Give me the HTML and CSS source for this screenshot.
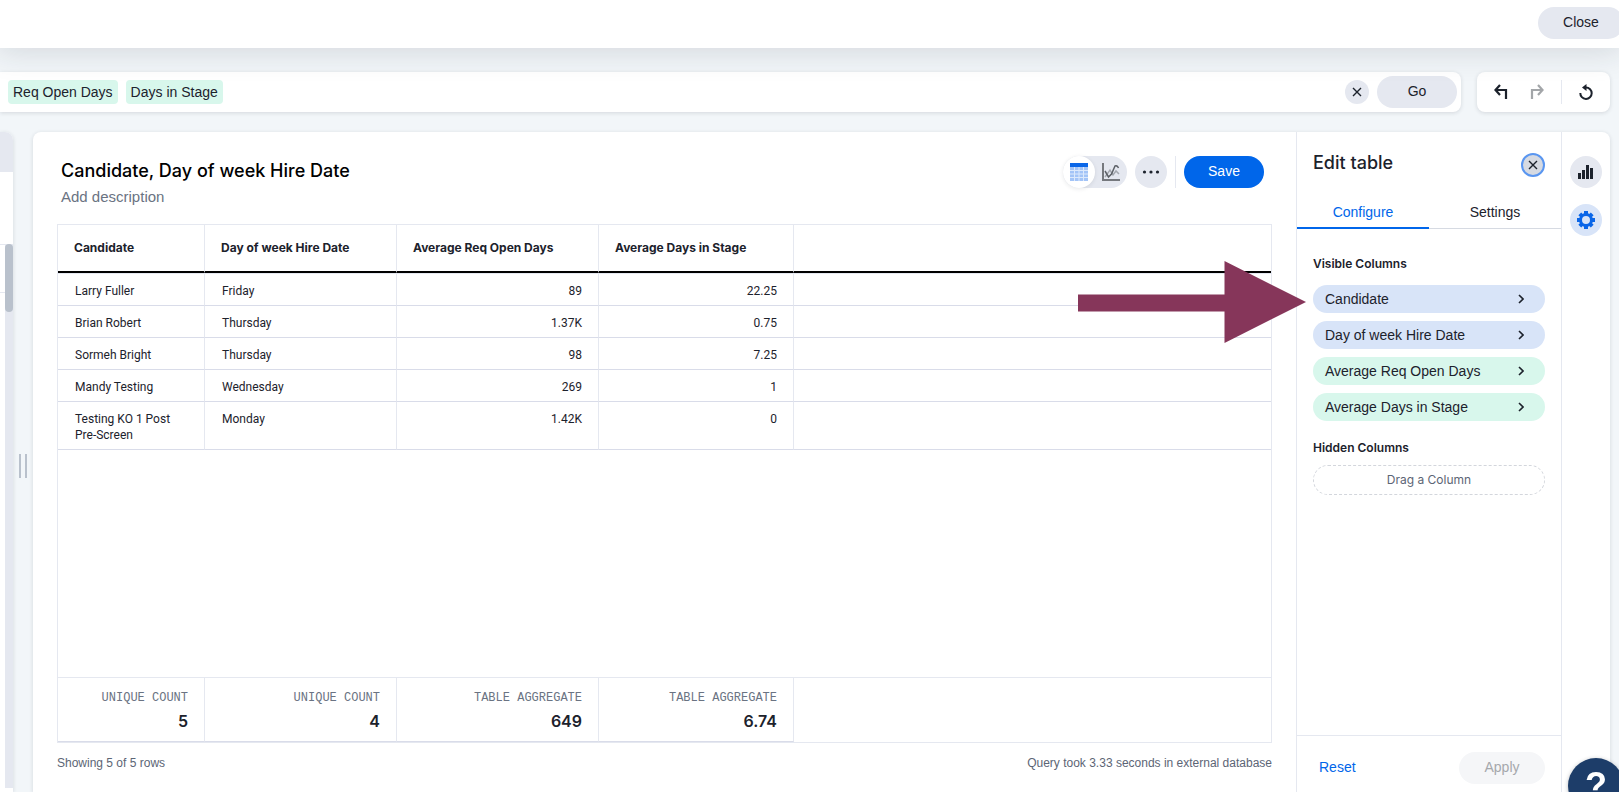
FILE: index.html
```html
<!DOCTYPE html>
<html lang="en">
<head>
  <meta charset="UTF-8">
  <title>Candidate, Day of week Hire Date</title>
  <link rel="stylesheet" href="styles.css">
</head>
<body>
  <header class="topbar">
    <button class="btn btn-close" type="button">Close</button>
  </header>

  <div class="query">
    <div class="search">
      <span class="chip">Req Open Days</span>
      <span class="chip">Days in Stage</span>
      <button class="icon-btn small clear" type="button" aria-label="Clear">
        <svg width="10" height="10" viewBox="0 0 10 10"><path d="M1 1l8 8M9 1l-8 8" stroke="#1c222c" stroke-width="1.4"/></svg>
      </button>
      <button class="btn btn-go" type="button">Go</button>
    </div>
    <div class="history">
      <button class="tool" type="button" aria-label="Undo">
        <svg width="16" height="16" viewBox="0 0 16 16" fill="none" stroke="#1c222c" stroke-width="2.2"><path d="M7 1L2.500 6 7 11M2.500 6H13v9"/></svg>
      </button>
      <button class="tool" type="button" aria-label="Redo" disabled>
        <svg width="16" height="16" viewBox="0 0 16 16" fill="none" stroke="#a3a6a9" stroke-width="2.2"><path d="M9 1l4.500 5L9 11M13.500 6H3v9"/></svg>
      </button>
      <span class="divider"></span>
      <button class="tool" type="button" aria-label="Reset query">
        <svg width="16" height="16" viewBox="0 0 16 16"><path d="M2.300 9a5.700 5.700 0 1 0 5.700-5.500" fill="none" stroke="#1c222c" stroke-width="2"/><path d="M8.500 0v7L4 3.500z" fill="#1c222c"/></svg>
      </button>
    </div>
  </div>

  <div class="workspace">
    <aside class="sources">
      <div class="sources-head"></div>
      <div class="sources-body">
        <div class="sources-list"><div class="source"></div></div>
        <div class="track"><div class="thumb"></div></div>
      </div>
    </aside>
    <div class="resizer"></div>

    <div class="card">
      <main class="answer">
        <div class="answer-head">
          <div>
            <h1>Candidate, Day of week Hire Date</h1>
            <p class="description">Add description</p>
          </div>
          <div class="actions">
            <div class="toggle">
              <button class="view active" type="button" aria-label="Table view">
                <svg width="18" height="18" viewBox="0 0 18 18"><path d="M0 0h18v18H0z" fill="#a3c4f7"/><path d="M0 0h18v4H0z" fill="#0a66e8"/><path d="M0 7.500h18M0 11h18M0 14.500h18M4.500 4v14M9 4v14M13.500 4v14" stroke="#dce9fc"/></svg>
              </button>
              <button class="view" type="button" aria-label="Chart view">
                <svg width="18" height="18" viewBox="0 0 18 18" fill="none"><path d="M1 0v17h17" stroke="#75787d" stroke-width="2"/><path d="M3 14l5-7 3 5 3-4 3 3" stroke="#a4a8af" stroke-width="1.5"/><path d="M3 8l3.500 6 3-3L13 3q2-1 3.500 2" stroke="#5c6066" stroke-width="1.5"/></svg>
              </button>
            </div>
            <button class="icon-btn" type="button" aria-label="More">
              <svg width="18" height="4" viewBox="0 0 18 4" fill="#1c222c"><circle cx="2.500" cy="2" r="1.600"/><circle cx="9" cy="2" r="1.600"/><circle cx="15.500" cy="2" r="1.600"/></svg>
            </button>
            <span class="divider tall"></span>
            <button class="btn btn-save" type="button">Save</button>
          </div>
        </div>

        <div class="grid">
          <table>
            <colgroup>
              <col class="c1"><col class="c2"><col class="c3"><col class="c4"><col>
            </colgroup>
            <thead>
              <tr><th>Candidate</th><th>Day of week Hire Date</th><th>Average Req Open Days</th><th>Average Days in Stage</th><th></th></tr>
            </thead>
            <tbody>
              <tr class="first"><td>Larry Fuller</td><td>Friday</td><td class="num">89</td><td class="num">22.25</td><td></td></tr>
              <tr><td>Brian Robert</td><td>Thursday</td><td class="num">1.37K</td><td class="num">0.75</td><td></td></tr>
              <tr><td>Sormeh Bright</td><td>Thursday</td><td class="num">98</td><td class="num">7.25</td><td></td></tr>
              <tr><td>Mandy Testing</td><td>Wednesday</td><td class="num">269</td><td class="num">1</td><td></td></tr>
              <tr class="last"><td>Testing KO 1 Post Pre-Screen</td><td>Monday</td><td class="num">1.42K</td><td class="num">0</td><td></td></tr>
              <tr class="filler"><td colspan="5"></td></tr>
            </tbody>
            <tfoot>
              <tr>
                <td><span class="agg">UNIQUE COUNT</span><strong>5</strong></td>
                <td><span class="agg">UNIQUE COUNT</span><strong>4</strong></td>
                <td><span class="agg">TABLE AGGREGATE</span><strong>649</strong></td>
                <td><span class="agg">TABLE AGGREGATE</span><strong>6.74</strong></td>
                <td></td>
              </tr>
            </tfoot>
          </table>
        </div>

        <div class="status">
          <span>Showing 5 of 5 rows</span>
          <span>Query took 3.33 seconds in external database</span>
        </div>
      </main>

      <section class="panel">
        <div class="panel-head">
          <h2>Edit table</h2>
          <button class="icon-btn small focused" type="button" aria-label="Close panel">
            <svg width="10" height="10" viewBox="0 0 10 10"><path d="M1 1l8 8M9 1l-8 8" stroke="#1c222c" stroke-width="1.4"/></svg>
          </button>
        </div>
        <div class="tabs">
          <button class="tab active" type="button">Configure</button>
          <button class="tab" type="button">Settings</button>
        </div>
        <div class="panel-body">
          <h3>Visible Columns</h3>
          <div class="columns">
            <button class="column" type="button">Candidate <svg width="6" height="10" viewBox="0 0 6 10"><path d="M1 1l4 4-4 4" fill="none" stroke="#1c222c" stroke-width="1.6"/></svg></button>
            <button class="column" type="button">Day of week Hire Date <svg width="6" height="10" viewBox="0 0 6 10"><path d="M1 1l4 4-4 4" fill="none" stroke="#1c222c" stroke-width="1.6"/></svg></button>
            <button class="column measure" type="button">Average Req Open Days <svg width="6" height="10" viewBox="0 0 6 10"><path d="M1 1l4 4-4 4" fill="none" stroke="#1c222c" stroke-width="1.6"/></svg></button>
            <button class="column measure" type="button">Average Days in Stage <svg width="6" height="10" viewBox="0 0 6 10"><path d="M1 1l4 4-4 4" fill="none" stroke="#1c222c" stroke-width="1.6"/></svg></button>
          </div>
          <h3>Hidden Columns</h3>
          <div class="dropzone">Drag a Column</div>
        </div>
        <div class="panel-foot">
          <button class="btn btn-reset" type="button">Reset</button>
          <button class="btn btn-apply" type="button" disabled>Apply</button>
        </div>
      </section>

      <nav class="rail">
        <button class="icon-btn" type="button" aria-label="Chart type">
          <svg width="16" height="16" viewBox="0 0 16 16" fill="#1c222c"><path d="M0 9h3v6H0zM4 6h3v9H4zM8 1h3v14H8zM12 4h3v11h-3z"/></svg>
        </button>
        <button class="icon-btn selected" type="button" aria-label="Configure table">
          <svg width="18" height="18" viewBox="-9 -9 18 18"><circle r="5.500" fill="none" stroke="#0a66e8" stroke-width="3"/><path d="M0-9V-6M0 6v3M-9 0h3M6 0h3M-6.200-6.200l2 2M4.200 4.200l2 2M-6.200 6.200l2-2M4.200-4.200l2-2" stroke="#0a66e8" stroke-width="4"/></svg>
        </button>
      </nav>
    </div>
  </div>

  <!-- callout pointing at the first column -->
  <svg class="callout" width="229" height="82" viewBox="0 0 229 82"><path d="M0 33.500h146.500V0L228 41l-81.500 41V50.500H0z" fill="#86365a"/></svg>
  <button class="help" type="button" aria-label="Help">?</button>
</body>
</html>
```
FILE: styles.css
```css
* {
  box-sizing: border-box;
}

body {
  margin: 0;
  height: 100vh;
  display: flex;
  flex-direction: column;
  overflow: hidden;
  background: #f2f6f9;
  color: #1c222c;
  font-family: "Liberation Sans", Arial, sans-serif;
  font-size: 14px;
}

button {
  border: 0;
  padding: 0;
  background: none;
  color: inherit;
  font: inherit;
}

svg {
  display: block;
}

h1, h2, h3, p {
  margin: 0;
}

.topbar {
  position: relative;
  z-index: 1;
  flex: none;
  height: 48px;
  display: flex;
  align-items: center;
  justify-content: flex-end;
  padding-bottom: 2px;
  background: #fff;
  box-shadow: 0 0 32px 4px rgba(25, 35, 49, 0.14);
}

.btn {
  height: 32px;
  width: 80px;
  padding-bottom: 2px;
  border-radius: 16px;
  background: #e5e8f0;
}
.btn-close {
  width: 86px;
  margin-right: -5px;
}
.btn-save {
  background: #0066ea;
  color: #fff;
}
.btn-reset {
  width: auto;
  padding: 0 6px 2px;
  background: none;
  color: #0066ea;
}
.btn-apply {
  width: 86px;
  background: #f5f6f8;
  color: #a5a8ac;
}

.icon-btn {
  display: flex;
  align-items: center;
  justify-content: center;
  width: 32px;
  height: 32px;
  border-radius: 50%;
  background: #e5e8f0;
}
.icon-btn.small {
  width: 24px;
  height: 24px;
}
.icon-btn.focused {
  border: 2px solid #5a96f0;
  background: #d6dae2;
}
.icon-btn.selected {
  background: #d8e4f8;
}

.divider {
  width: 1px;
  height: 24px;
  background: #e5e8f0;
}
.divider.tall {
  height: 32px;
}

/* search bar */
.query {
  flex: none;
  display: flex;
  gap: 16px;
  margin-top: 24px;
  padding-right: 9px;
}
.search, .history {
  display: flex;
  align-items: center;
  height: 40px;
  background: #fff;
  border-radius: 8px;
  box-shadow: 0 1px 4px rgba(25, 35, 49, 0.14);
}
.search {
  flex: 1;
  gap: 8px;
  padding: 0 4px 0 8px;
  border-radius: 0 8px 8px 0;
}
.history {
  width: 133px;
  padding-left: 6px;
}
.chip {
  height: 24px;
  line-height: 24px;
  padding: 0 5px;
  border-radius: 4px;
  background: #d8f7ec;
}
.clear {
  margin-left: auto;
}
.tool {
  display: flex;
  align-items: center;
  justify-content: center;
  width: 36px;
  height: 32px;
}
.history .divider {
  margin: 0 6px;
}

/* workspace */
.workspace {
  flex: 1;
  min-height: 0;
  display: flex;
  margin-top: 20px;
  padding-right: 9px;
}
.sources {
  width: 13px;
  display: flex;
  flex-direction: column;
  background: #fff;
  border-radius: 0 8px 0 0;
  box-shadow: 0 1px 4px rgba(25, 35, 49, 0.14);
}
.sources-head {
  height: 40px;
  border-radius: 0 8px 0 0;
  background: #e5e8f0;
}
.sources-body {
  flex: 1;
  display: flex;
  margin: 72px 0 4px;
}
.sources-list {
  flex: 1;
  border-top: 1px solid #e5e8f0;
}
.source {
  height: 48px;
  border-bottom: 1px solid #e5e8f0;
}
.track {
  width: 8px;
  background: #e5e8f0;
}
.thumb {
  height: 68px;
  border-radius: 4px;
  background: #b9c1cc;
}
.resizer {
  align-self: center;
  width: 8px;
  height: 24px;
  margin: 8px 6px 0;
  border: solid #b9c1cc;
  border-width: 0 2px;
}

.card {
  flex: 1;
  display: flex;
  background: #fff;
  border-radius: 8px 8px 0 0;
  box-shadow: 0 1px 4px rgba(25, 35, 49, 0.14);
}
.answer {
  flex: 1;
  display: flex;
  flex-direction: column;
  padding: 24px 24px 21px;
}
.answer-head {
  display: flex;
  justify-content: space-between;
  height: 68px;
  padding: 0 8px 0 4px;
}
h1, h2 {
  font-family: Inter, sans-serif;
  font-size: 18px;
  font-weight: 500;
}
h1 {
  line-height: 30px;
  color: #000;
}
.description {
  font-size: 15px;
  line-height: 22px;
  color: #6a7382;
}
.actions {
  display: flex;
  gap: 8px;
}
.toggle {
  display: flex;
  height: 32px;
  border-radius: 16px;
  background: #e5e8f0;
}
.view {
  display: flex;
  align-items: center;
  justify-content: center;
  width: 32px;
  border-radius: 50%;
}
.view.active {
  background: #fff;
  box-shadow: 0 1px 4px rgba(25, 35, 49, 0.1);
}

.grid {
  flex: 1;
  display: flex;
  border: 1px solid #e5e8f0;
}
table {
  width: 100%;
  table-layout: fixed;
  border-collapse: separate;
  border-spacing: 0;
}
.c1 { width: 147px; }
.c2 { width: 192px; }
.c3 { width: 202px; }
.c4 { width: 195px; }
th, td {
  border-right: 1px solid #e5e8f0;
  border-bottom: 1px solid #d9dce9;
  font-size: 12px;
  line-height: 16px;
  text-align: left;
}
th:last-child, td:last-child {
  border-right: 0;
}
th {
  height: 48px;
  padding: 0 16px;
  border-bottom: 2px solid #000;
  font-family: Inter, sans-serif;
  font-weight: 700;
}
td {
  height: 32px;
  padding: 9px 16px 6px 17px;
  vertical-align: top;
  font-family: Roboto, sans-serif;
}
.first td {
  height: 33px;
  border-top: 1px solid #e5e8f0;
}
.last td {
  height: 48px;
}
.filler td {
  height: auto;
  padding: 0;
  border-bottom-color: #e5e8f0;
}
.num, tfoot td {
  text-align: right;
}
tfoot td {
  height: 64px;
  padding: 12px 16px 8px;
}
tfoot td:last-child {
  border-bottom: 0;
}
.agg {
  display: block;
  margin-bottom: 3px;
  color: #6a7382;
  font-family: "Liberation Mono", monospace;
}
tfoot strong {
  display: block;
  font-family: Inter, sans-serif;
  font-size: 16px;
  font-weight: 600;
  line-height: 24px;
}
.status {
  display: flex;
  justify-content: space-between;
  margin-top: 12px;
  color: #5c6575;
  font-size: 12px;
  line-height: 16px;
}

/* edit panel */
.panel {
  width: 266px;
  display: flex;
  flex-direction: column;
  border: solid #e5e8f0;
  border-width: 0 1px;
}
.panel-head {
  display: flex;
  justify-content: space-between;
  padding: 21px 16px 17px;
}
.panel-head h2 {
  line-height: 20px;
}
.tabs {
  display: flex;
}
.tab {
  flex: 1;
  height: 35px;
  padding-top: 2px;
  border-bottom: 1px solid #d6dae2;
}
.tab.active {
  border-bottom: 2px solid #0066ea;
  color: #0066ea;
}
.panel-body {
  flex: 1;
  padding: 27px 16px 0;
}
h3 {
  font-family: Inter, sans-serif;
  font-size: 12px;
  font-weight: 600;
  line-height: 16px;
}
.columns {
  display: grid;
  gap: 8px;
  margin: 13px 0 19px;
}
.column {
  display: flex;
  align-items: center;
  justify-content: space-between;
  height: 28px;
  padding: 0 21px 1px 12px;
  border-radius: 14px;
  background: #d8e4f8;
}
.column.measure {
  background: #d8f7ec;
}
.dropzone {
  height: 30px;
  margin-top: 9px;
  border: 1px dashed #d3d6dc;
  border-radius: 15px;
  color: #5c6575;
  font-family: Inter, sans-serif;
  font-size: 12px;
  line-height: 28px;
  text-align: center;
}
.panel-foot {
  display: flex;
  justify-content: space-between;
  padding: 16px 16px 8px;
  border-top: 1px solid #e5e8f0;
}

.rail {
  width: 48px;
  display: flex;
  flex-direction: column;
  align-items: center;
  gap: 16px;
  padding-top: 24px;
}

/* overlays */
.callout {
  position: absolute;
  top: 261px;
  right: 312px;
}
.help {
  position: fixed;
  right: -5px;
  bottom: -22px;
  width: 56px;
  height: 56px;
  border-radius: 50%;
  background: #1d3d69;
  color: #fff;
  font-size: 36px;
  font-weight: 700;
  box-shadow: 0 1px 4px rgba(25, 35, 49, 0.3);
}
```
